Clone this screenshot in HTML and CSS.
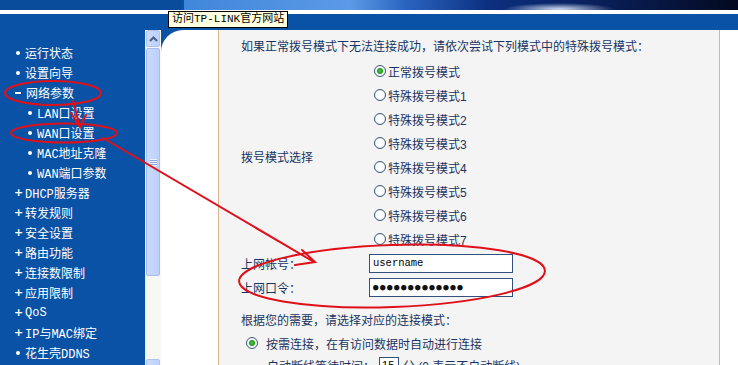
FILE: index.html
```html
<!DOCTYPE html>
<html lang="zh-CN">
<head>
    <meta charset="UTF-8">
    <title>WAN口设置</title>
    <link rel="stylesheet" href="styles.css">
</head>
<body>
    <div class="top-strip">
        <div class="top-left"></div>
        <div class="banner"></div>
    </div>
    <div class="rule"></div>
    <div class="band"></div>

    <div class="frame">
        <ul class="menu">
            <li><span class="dot"></span>运行状态</li>
            <li><span class="dot"></span>设置向导</li>
            <li><span class="minus"></span>网络参数</li>
            <li class="sub"><span class="dot"></span>LAN口设置</li>
            <li class="sub"><span class="dot"></span>WAN口设置</li>
            <li class="sub"><span class="dot"></span>MAC地址克隆</li>
            <li class="sub"><span class="dot"></span>WAN端口参数</li>
            <li><span class="plus">+</span>DHCP服务器</li>
            <li><span class="plus">+</span>转发规则</li>
            <li><span class="plus">+</span>安全设置</li>
            <li><span class="plus">+</span>路由功能</li>
            <li><span class="plus">+</span>连接数限制</li>
            <li><span class="plus">+</span>应用限制</li>
            <li><span class="plus">+</span>QoS</li>
            <li><span class="plus">+</span>IP与MAC绑定</li>
            <li><span class="dot"></span>花生壳DDNS</li>
        </ul>

        <div class="scrollbar">
            <div class="sb-btn">
                <svg width="9" height="6" viewBox="0 0 9 6"><path d="M1 5 L4.5 1.5 L8 5" fill="none" stroke="#4d6185" stroke-width="2"/></svg>
            </div>
            <div class="sb-track">
                <div class="sb-thumb"><span class="grip"></span></div>
            </div>
            <div class="sb-btn">
                <svg width="9" height="6" viewBox="0 0 9 6"><path d="M1 1 L4.5 4.5 L8 1" fill="none" stroke="#4d6185" stroke-width="2"/></svg>
            </div>
        </div>

        <div class="main">
            <div class="panel">
                <div class="content">
                    <div class="form">
                        <p class="note">如果正常拨号模式下无法连接成功，请依次尝试下列模式中的特殊拨号模式：</p>
                        <div class="label dial-label">拨号模式选择</div>
                        <div class="modes">
                            <label class="opt"><input type="radio" name="dial" checked>正常拨号模式</label>
                            <label class="opt"><input type="radio" name="dial">特殊拨号模式1</label>
                            <label class="opt"><input type="radio" name="dial">特殊拨号模式2</label>
                            <label class="opt"><input type="radio" name="dial">特殊拨号模式3</label>
                            <label class="opt"><input type="radio" name="dial">特殊拨号模式4</label>
                            <label class="opt"><input type="radio" name="dial">特殊拨号模式5</label>
                            <label class="opt"><input type="radio" name="dial">特殊拨号模式6</label>
                            <label class="opt"><input type="radio" name="dial">特殊拨号模式7</label>
                        </div>
                        <div class="label row">上网帐号：</div>
                        <div class="field"><input class="box" type="text" value="username"></div>
                        <div class="label row">上网口令：</div>
                        <div class="field"><input class="box pw" type="text" value="●●●●●●●●●●●●●"></div>
                        <p class="note gap">根据您的需要，请选择对应的连接模式：</p>
                        <label class="opt wide"><input type="radio" name="link" checked>按需连接，在有访问数据时自动进行连接</label>
                        <div class="sub-row">自动断线等待时间：<input class="small" type="text" value="15">分 (0 表示不自动断线)</div>
                    </div>
                </div>
            </div>
        </div>
    </div>

    <div class="tip">访问TP-LINK官方网站</div>

    <svg class="marks" width="738" height="365" viewBox="0 0 738 365">
        <g fill="none" stroke="#e0101a" stroke-width="2" stroke-linecap="round">
            <ellipse cx="53" cy="93" rx="48" ry="12"/>
            <ellipse cx="64" cy="133" rx="53" ry="9.5"/>
            <path d="M73 101 L80 127 M71 113 L80 127 L86 115"/>
            <path d="M103 138 L314 262 M302 250 L315 262 L295 265"/>
            <ellipse cx="392" cy="276" rx="153" ry="31" transform="rotate(-2 392 276)"/>
        </g>
    </svg>
</body>
</html>
```

FILE: styles.css
```css
* {
    box-sizing: border-box;
}
body {
    margin: 0;
    width: 738px;
    height: 365px;
    overflow: hidden;
    position: relative;
    background-color: #0a52a5;
    font-family: "Liberation Sans", "Noto Sans CJK SC", sans-serif;
    font-size: 12px;
}
.top-strip {
    display: flex;
    height: 10px;
}
.top-left {
    width: 182px;
    background-color: #0a4c9c;
}
.banner {
    flex: 1;
    margin-left: 2px;
    background:
        radial-gradient(ellipse 55px 6px at 375px 9px, rgba(225, 238, 255, 0.9), rgba(225, 238, 255, 0) 100%),
        linear-gradient(90deg, #3f86da 0%, #5c9ae6 30%, #2a64c0 40%, #0c2f80 55%, #0a1f5a 75%, #030a20 100%);
}
.rule {
    height: 4px;
    background-color: #fff;
}
.band {
    height: 16px;
    background-color: #0a52a5;
}
.frame {
    display: grid;
    grid-template-columns: 145px 16px 1fr;
    height: 335px;
}

/* left menu */
.menu {
    list-style: none;
    margin: 0;
    padding: 13px 0 0 0;
    background-color: #0a52a5;
    color: #fff;
    font-family: "Liberation Mono", "Noto Sans CJK SC", monospace;
    font-size: 12px;
}
.menu li {
    display: flex;
    align-items: center;
    height: 20px;
    padding-left: 14px;
    white-space: nowrap;
}
.menu li.sub {
    padding-left: 26px;
}
.dot {
    width: 4px;
    height: 4px;
    margin: 0 5px 0 2px;
    border-radius: 50%;
    background-color: #fff;
}
.minus {
    width: 6px;
    height: 2px;
    margin: 0 5px 0 1px;
    background-color: #fff;
}
.plus {
    width: 11px;
    font-family: "DejaVu Sans", sans-serif;
    font-weight: bold;
    font-size: 11px;
    line-height: 20px;
}

/* scrollbar */
.scrollbar {
    display: flex;
    flex-direction: column;
    background-color: #f7f7f4;
    border-left: 1px solid #e8ecf4;
}
.sb-btn {
    height: 17px;
    margin: 0 1px 0 0;
    display: flex;
    align-items: center;
    justify-content: center;
    background: linear-gradient(90deg, #cddcfb, #bcd0fa);
    border: 1px solid #b0c4f0;
    border-radius: 2px;
}
.sb-track {
    flex: 1;
    padding: 1px 1px 0 0;
}
.sb-thumb {
    height: 228px;
    display: flex;
    align-items: center;
    justify-content: center;
    background: linear-gradient(90deg, #cbdafc, #bdd0fa);
    border: 1px solid #a8bdee;
    border-radius: 2px;
}
.grip {
    width: 7px;
    height: 7px;
    background: repeating-linear-gradient(180deg, #eef3ff 0 1px, #8ea6dc 1px 2px);
}

/* main panel */
.main {
    background-color: #0a52a5;
}
.panel {
    height: 100%;
    padding-left: 57px;
    background-color: #fff;
    border-top-left-radius: 22px;
}
.content {
    width: 502px;
    height: 100%;
    padding: 5px 0 0 22px;
    background-color: #f4f4f4;
    border-left: 1px solid #d9b98c;
    border-right: 1px solid #d9b98c;
    color: #1a3462;
    white-space: nowrap;
}
.form {
    display: grid;
    grid-template-columns: 128px 1fr;
}
.note {
    grid-column: 1 / -1;
    margin: 0;
    height: 24px;
    line-height: 24px;
}
.note.gap {
    margin-top: 11px;
    height: 22px;
    line-height: 22px;
}
.label {
    display: flex;
    align-items: center;
}
.dial-label {
    padding-top: 2px;
}
.row {
    height: 24px;
}
.opt {
    display: flex;
    align-items: center;
    height: 24px;
}
.opt input {
    appearance: none;
    width: 12px;
    height: 12px;
    margin: 0 2px 0 5px;
    border: 1px solid #3a5578;
    border-radius: 50%;
    background: radial-gradient(circle, #fff 40%, #e4e4dc 100%);
}
.opt input:checked {
    background: radial-gradient(circle, #52c852 0, #1f9a1f 2.5px, #e8f0e8 3.5px, #fff 4px, #e4e4dc 100%);
}
.opt.wide {
    grid-column: 1 / -1;
    height: 22px;
}
.opt.wide input {
    margin-right: 8px;
}
.field {
    display: flex;
    align-items: center;
    height: 24px;
}
.box {
    width: 144px;
    height: 19px;
    padding: 0 3px;
    border: 1px solid #33507e;
    background-color: #fff;
    color: #000;
    font-family: "Liberation Mono", monospace;
    font-size: 10.5px;
    outline: none;
}
.box.pw {
    font-family: "DejaVu Sans Mono", monospace;
    font-size: 9px;
    letter-spacing: 1.6px;
    color: #111;
}
.sub-row {
    grid-column: 1 / -1;
    display: flex;
    align-items: center;
    height: 22px;
    padding-left: 26px;
}
.small {
    width: 20px;
    height: 17px;
    margin: 0 4px;
    border: 1px solid #33507e;
    font-size: 11px;
    padding: 0 2px;
}

/* tooltip and red annotations on top */
.tip {
    position: absolute;
    left: 168px;
    top: 11px;
    height: 17px;
    padding: 0 3px;
    line-height: 15px;
    background-color: #ffffe1;
    border: 1px solid #000;
    color: #000;
    font-family: "Liberation Mono", "Noto Sans CJK SC", monospace;
    font-size: 11px;
    white-space: nowrap;
}
.marks {
    position: absolute;
    left: 0;
    top: 0;
    pointer-events: none;
}
```
